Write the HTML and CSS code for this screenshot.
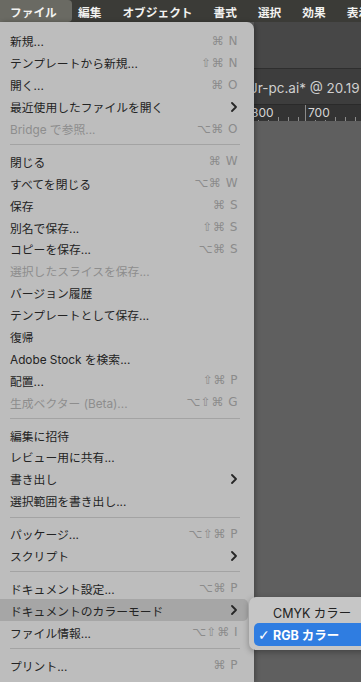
FILE: index.html
```html
<!DOCTYPE html>
<html lang="ja">
<head>
    <meta charset="UTF-8">
    <meta name="viewport" content="width=device-width, initial-scale=1.0">
    <title>ファイル</title>
    <link rel="stylesheet" href="styles.css">
</head>
<body>
    <!-- メニューバー -->
    <div class="menubar">
        <span class="bar-item active">ファイル</span>
        <div class="bar-rest">
            <span class="bar-item">編集</span>
            <span class="bar-item">オブジェクト</span>
            <span class="bar-item">書式</span>
            <span class="bar-item">選択</span>
            <span class="bar-item">効果</span>
            <span class="bar-item">表示</span>
        </div>
    </div>

    <div class="screen">
        <!-- ファイルメニュー -->
        <div class="menu">
            <div class="row"><span>新規...</span><span class="key">⌘ N</span></div>
            <div class="row"><span>テンプレートから新規...</span><span class="key">⇧⌘ N</span></div>
            <div class="row"><span>開く...</span><span class="key">⌘ O</span></div>
            <div class="row"><span>最近使用したファイルを開く</span><span class="chev"><svg width="8" height="10" viewBox="0 0 8 10"><polyline points="2,1 6,5 2,9" /></svg></span></div>
            <div class="row off"><span>Bridge で参照...</span><span class="key">⌥⌘ O</span></div>
            <div class="sep"></div>
            <div class="row"><span>閉じる</span><span class="key">⌘ W</span></div>
            <div class="row"><span>すべてを閉じる</span><span class="key">⌥⌘ W</span></div>
            <div class="row"><span>保存</span><span class="key">⌘ S</span></div>
            <div class="row"><span>別名で保存...</span><span class="key">⇧⌘ S</span></div>
            <div class="row"><span>コピーを保存...</span><span class="key">⌥⌘ S</span></div>
            <div class="row off"><span>選択したスライスを保存...</span></div>
            <div class="row"><span>バージョン履歴</span></div>
            <div class="row"><span>テンプレートとして保存...</span></div>
            <div class="row"><span>復帰</span></div>
            <div class="row"><span>Adobe Stock を検索...</span></div>
            <div class="row"><span>配置...</span><span class="key">⇧⌘ P</span></div>
            <div class="row off"><span>生成ベクター (Beta)...</span><span class="key">⌥⇧⌘ G</span></div>
            <div class="sep"></div>
            <div class="row"><span>編集に招待</span></div>
            <div class="row"><span>レビュー用に共有...</span></div>
            <div class="row"><span>書き出し</span><span class="chev"><svg width="8" height="10" viewBox="0 0 8 10"><polyline points="2,1 6,5 2,9" /></svg></span></div>
            <div class="row"><span>選択範囲を書き出し...</span></div>
            <div class="sep"></div>
            <div class="row"><span>パッケージ...</span><span class="key">⌥⇧⌘ P</span></div>
            <div class="row"><span>スクリプト</span><span class="chev"><svg width="8" height="10" viewBox="0 0 8 10"><polyline points="2,1 6,5 2,9" /></svg></span></div>
            <div class="sep"></div>
            <div class="row"><span>ドキュメント設定...</span><span class="key">⌥⌘ P</span></div>
            <div class="row hover"><span>ドキュメントのカラーモード</span><span class="chev"><svg width="8" height="10" viewBox="0 0 8 10"><polyline points="2,1 6,5 2,9" /></svg></span></div>
            <div class="row"><span>ファイル情報...</span><span class="key">⌥⇧⌘ I</span></div>
            <div class="sep"></div>
            <div class="row"><span>プリント...</span><span class="key">⌘ P</span></div>
        </div>

        <!-- 背後のウィンドウ -->
        <div class="app">
            <div class="toolbar"></div>
            <div class="tab">Jr-pc.ai* @ 20.19 % (RGB/プレビュー)</div>
            <div class="ruler">
                <div class="mark"><span>800</span></div>
                <div class="mark"><span>700</span></div>
            </div>
            <div class="canvas"></div>
        </div>

        <!-- サブメニュー -->
        <div class="submenu">
            <div class="sub-row"><span class="check"></span>CMYK カラー</div>
            <div class="sub-row on"><span class="check">✓</span>RGB カラー</div>
        </div>
    </div>
</body>
</html>
```

FILE: styles.css
```css
body {
    margin: 0;
    width: 361px;
    height: 682px;
    overflow: hidden;
    background-color: #5f5f5f;
    font-family: Inter, "Noto Sans CJK JP", sans-serif;
    font-size: 11.8px;
}

/* メニューバー */
.menubar {
    display: flex;
    height: 22px;
    background-color: #3b3b37;
    color: #f2f2f0;
    font-weight: 700;
    font-size: 11.7px;
    white-space: nowrap;
    overflow: hidden;
}
.bar-item {
    display: flex;
    align-items: center;
    flex-shrink: 0;
}
.bar-item.active {
    width: 62px;
    padding-left: 10px;
    background-color: #6a6a63;
    border-radius: 0 4px 4px 0;
}
.bar-rest {
    display: flex;
    flex-shrink: 0;
    gap: 21px;
    margin-left: 6px;
}

.screen {
    position: relative;
    display: flex;
    height: 660px;
}

/* ファイルメニュー */
.menu {
    width: 254px;
    flex-shrink: 0;
    padding-top: 8px;
    background-color: #bdbdbd;
    border-radius: 0 7px 0 0;
    color: #232323;
    box-shadow: 2px 0 4px rgba(0, 0, 0, 0.25);
    z-index: 2;
}
.row {
    display: flex;
    align-items: center;
    height: 21.9px;
    padding: 0 16px 0 10px;
    white-space: nowrap;
}
.row.off {
    color: #8d8d8d;
}
.row.hover {
    background-color: #a6a6a6;
    margin-right: 6px;
    padding-right: 10px;
    border-radius: 0 5px 5px 0;
}
.key {
    margin-left: auto;
    color: #8b8b8b;
    font-family: "DejaVu Sans", Inter, sans-serif;
    font-size: 12px;
    letter-spacing: 0.5px;
}
.chev {
    margin-left: auto;
    display: flex;
}
.chev polyline {
    fill: none;
    stroke: #262626;
    stroke-width: 1.8;
    stroke-linecap: round;
    stroke-linejoin: round;
}
.sep {
    height: 11px;
    display: flex;
    align-items: center;
    margin: 0 14px 0 10px;
}
.sep::after {
    content: "";
    flex: 1;
    height: 1px;
    background-color: #a3a3a3;
}

/* 背後のウィンドウ */
.app {
    flex: 1;
    display: flex;
    flex-direction: column;
    overflow: hidden;
}
.toolbar {
    height: 46px;
    background-color: #474747;
    border-bottom: 1px solid #2e2e2e;
}
.tab {
    height: 35px;
    display: flex;
    align-items: center;
    margin-left: -4px;
    background-color: #3d3d3d;
    color: #cfcfcf;
    font-size: 13.5px;
    white-space: nowrap;
}
.ruler {
    height: 16px;
    display: flex;
    background-color: #333333;
    border-top: 1px solid #2a2a2a;
    color: #d6d6d6;
    font-size: 12px;
}
.mark {
    width: 54px;
    flex-shrink: 0;
    margin-left: -6px;
    padding-left: 2px;
    border-left: 1px solid #8a8a8a;
    line-height: 16px;
    background-image: repeating-linear-gradient(to right, transparent 0, transparent 9px, #8a8a8a 9px, #8a8a8a 10px);
    background-size: 100% 4px;
    background-position: 0 100%;
    background-repeat: no-repeat;
}
.mark + .mark {
    margin-left: 0;
}
.mark span {
    background-color: #333333;
}
.canvas {
    flex: 1;
    background-color: #5f5f5f;
}

/* サブメニュー */
.submenu {
    position: absolute;
    left: 249px;
    top: 575px;
    width: 120px;
    padding: 4px 0 4px 5px;
    background-color: #c6c6c6;
    border-radius: 7px 0 0 7px;
    box-shadow: 0 2px 6px rgba(0, 0, 0, 0.3);
    z-index: 3;
    color: #222222;
    font-size: 12.5px;
}
.sub-row {
    display: flex;
    align-items: center;
    height: 22px;
    padding-left: 4px;
    white-space: nowrap;
    border-radius: 5px 0 0 5px;
}
.sub-row.on {
    background-color: #2f7de1;
    color: #ffffff;
    font-weight: 700;
    height: 23px;
}
.check {
    width: 15px;
    font-family: "DejaVu Sans", sans-serif;
    font-size: 14px;
    font-weight: 700;
}
```
